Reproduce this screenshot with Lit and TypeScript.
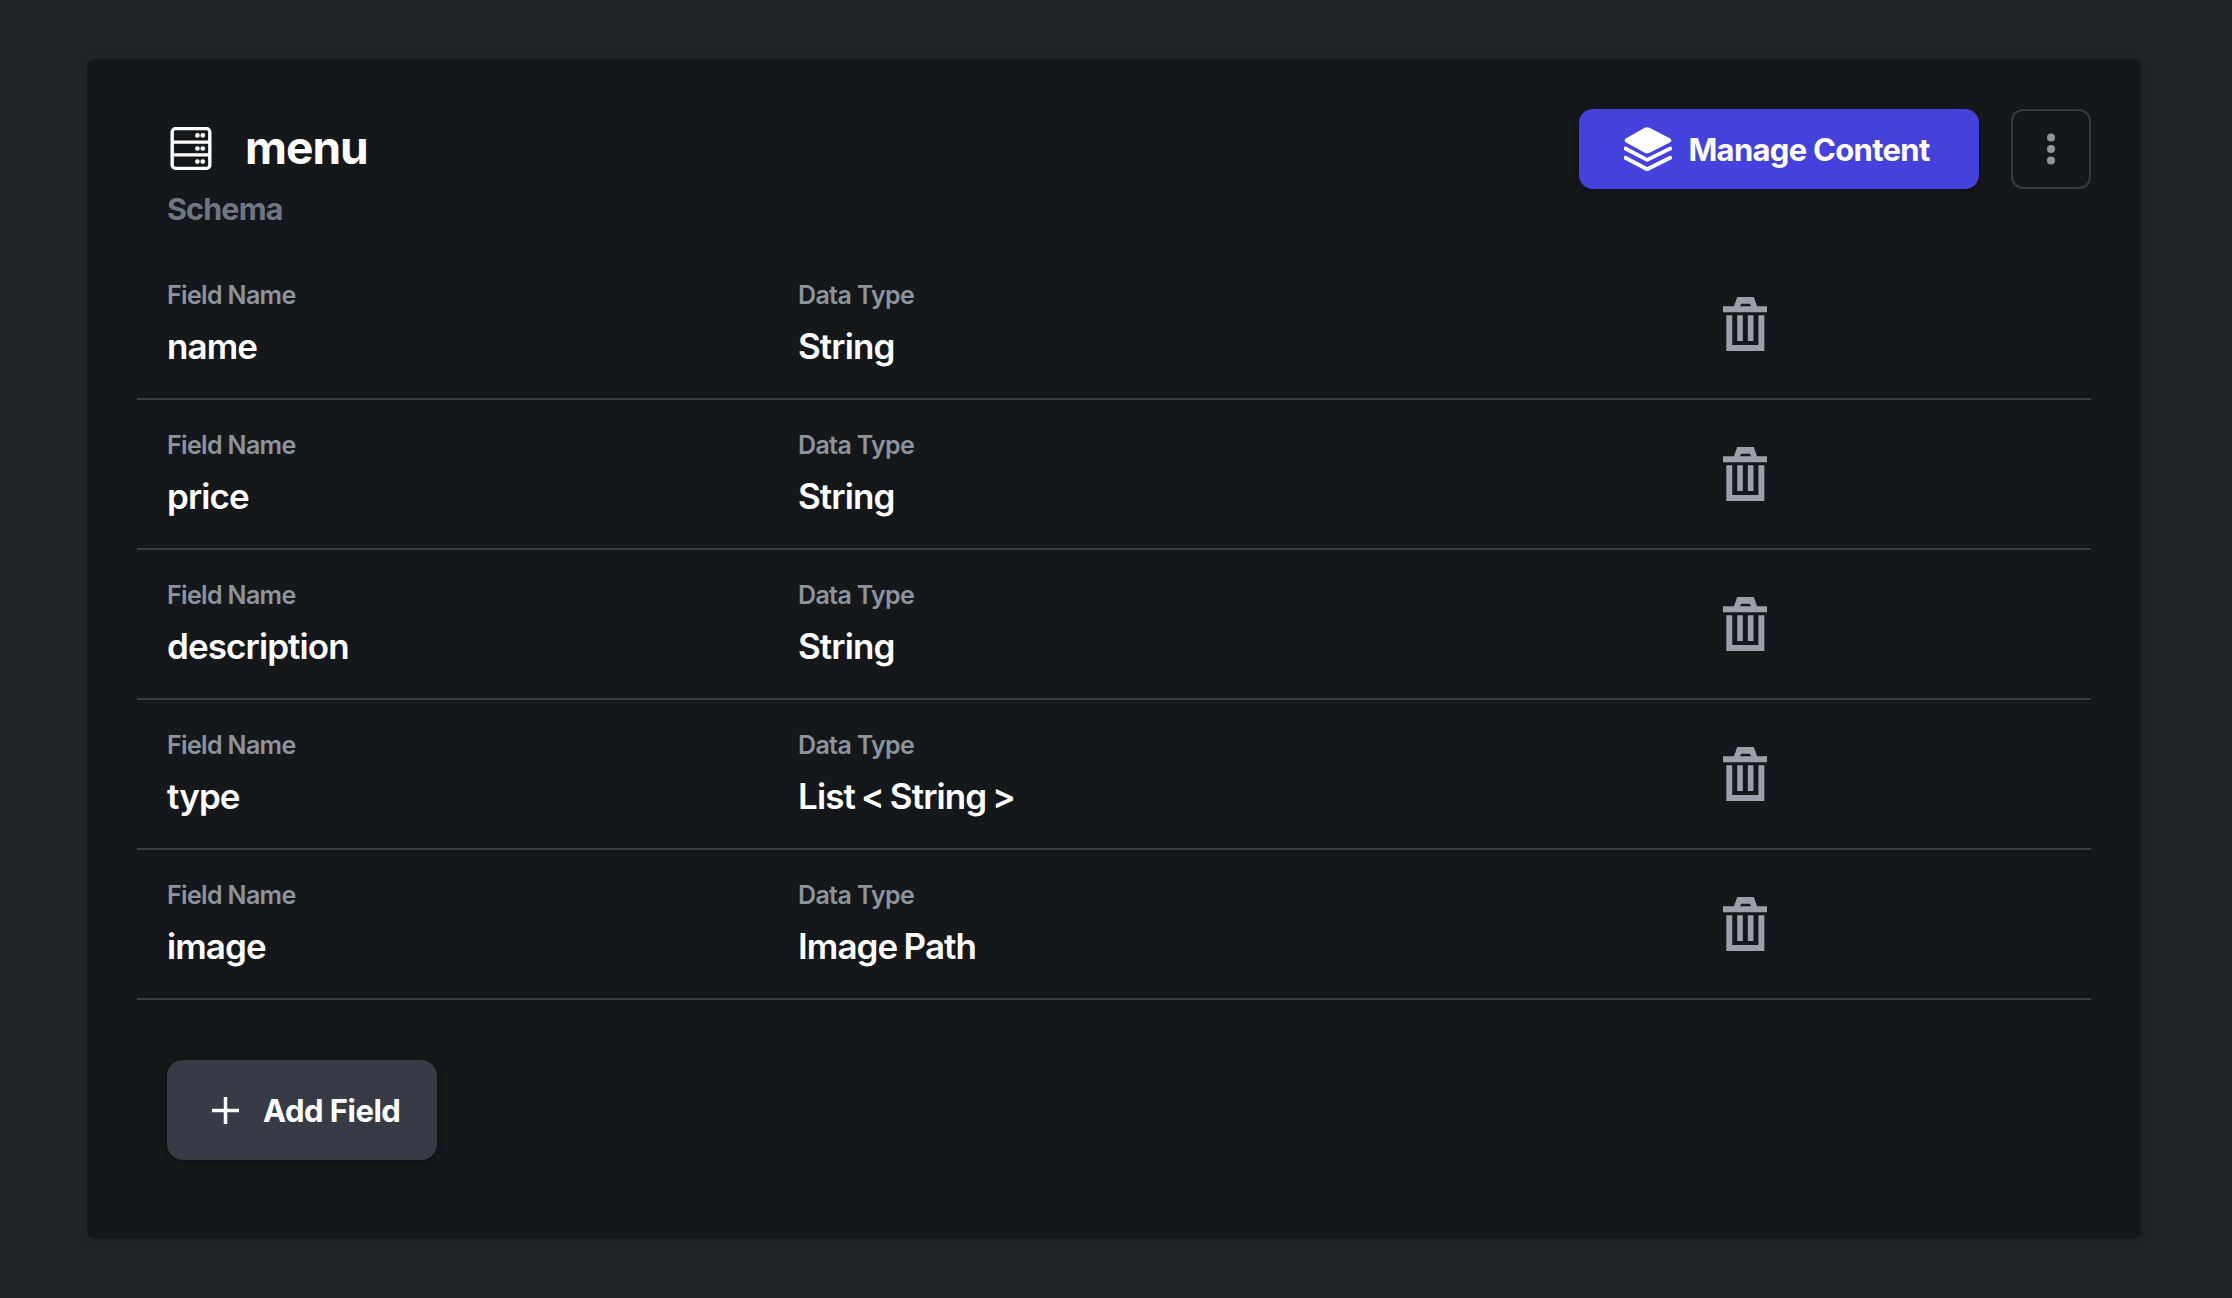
import { LitElement, html, svg, css } from "lit";
import { customElement } from "lit/decorators.js";

const FIELDS = [
  ["name", "String"],
  ["price", "String"],
  ["description", "String"],
  ["type", "List < String >"],
  ["image", "Image Path"],
];

@customElement("app-root")
export class AppRoot extends LitElement {
  static styles = css`
    :host { display: block; min-height: 1298px; background: #1f2429; font-family: Inter, "Noto Sans", sans-serif; padding: 59px 91px 60px 87px; box-sizing: border-box; }
    .card { background: #15181b; border-radius: 8px; padding: 50px 50px 79px 50px; height: 1180px; box-sizing: border-box; box-shadow: 0 2px 8px rgba(0,0,0,.12); }
    .head { display: flex; justify-content: space-between; height: 141px; padding-left: 30px; }
    .titles { display: flex; flex-direction: column; }
    .title { display: flex; align-items: center; height: 76px; gap: 33px; padding-left: 3px; color: #fff; font-size: 46px; font-weight: 700; letter-spacing: -1px; }
    .server { width: 42px; height: 43px; margin-top: 2px; }
    .schema { color: #6f7782; font-size: 30.5px; font-weight: 700; letter-spacing: -.85px; line-height: 36px; margin-top: 6px; }
    .actions { display: flex; gap: 32px; }
    button { font-family: inherit; border: none; color: #fff; display: flex; align-items: center; cursor: pointer; padding: 0; }
    .manage { width: 400px; height: 80px; background: #4541dc; border-radius: 14px; justify-content: center; gap: 16px; font-size: 31px; font-weight: 700; letter-spacing: -.7px; box-shadow: 0 2px 6px rgba(0,0,0,.3); }
    .layers { width: 48px; height: 44px; margin-left: -4px; }
    .kebab { width: 80px; height: 80px; background: transparent; border: 2px solid #353a42; border-radius: 12px; justify-content: center; box-sizing: border-box; }
    .row { display: grid; grid-template-columns: 631px 1fr 44px 324px; align-items: center; height: 150px; box-sizing: border-box; border-bottom: 2px solid #393e46; padding-left: 30px; }
    .label { color: #8c949e; font-size: 25px; font-weight: 600; letter-spacing: -.65px; line-height: 30px; }
    .value { color: #fff; font-size: 35px; font-weight: 600; letter-spacing: -.9px; word-spacing: -1.8px; line-height: 44px; margin-top: 14px; }
    .trash { width: 44px; height: 54px; display: block; }
    .add { margin: 60px 0 0 30px; width: 270px; height: 100px; background: #363b45; border-radius: 16px; justify-content: flex-start; padding-left: 45px; gap: 24px; font-size: 31px; font-weight: 700; letter-spacing: -.5px; box-shadow: 0 2px 6px rgba(0,0,0,.3); }
    .plus { width: 27px; height: 27px; }
  `;

  render() {
    return html`<div class="card">
      <div class="head">
        <div class="titles">
          <div class="title">
            <svg class="server" viewBox="62 52 122 128" fill="none">
              <rect x="67" y="57" width="112" height="118" rx="10" stroke="#fff" stroke-width="10"/>
              <path d="M67 97h112M67 135h112" stroke="#fff" stroke-width="10"/>
              ${[77, 116, 155].map((y) => svg`<circle cx="142" cy=${y} r="7" fill="#fff"/><circle cx="158" cy=${y} r="7" fill="#fff"/>`)}
            </svg>
            <span>menu</span>
          </div>
          <div class="schema">Schema</div>
        </div>
        <div class="actions">
          <button class="manage">
            <svg class="layers" viewBox="48 33 139 127" fill="#fff">
              <path d="M108 35q7-3 14 0l60 31q6 5 0 11l-60 30q-7 3-14 0L53 77q-6-6 0-11z"/>
              <path d="M52 95l63 33 67-33" fill="none" stroke="#fff" stroke-width="11" stroke-linecap="round" stroke-linejoin="round"/>
              <path d="M52 122l63 33 67-33" fill="none" stroke="#fff" stroke-width="11" stroke-linecap="round" stroke-linejoin="round"/>
            </svg>
            <span>Manage Content</span>
          </button>
          <button class="kebab" aria-label="More">
            <svg width="10" height="32" viewBox="0 0 10 32" fill="#8f96a0"><circle cx="5" cy="4.5" r="4"/><circle cx="5" cy="16" r="4"/><circle cx="5" cy="27.5" r="4"/></svg>
          </button>
        </div>
      </div>
      ${FIELDS.map(([n, t]) => html`<div class="row">
        <div><div class="label">Field Name</div><div class="value">${n}</div></div>
        <div><div class="label">Data Type</div><div class="value">${t}</div></div>
        <svg class="trash" viewBox="67 47 133 163" fill="#9aa1ab">
          <path fill-rule="evenodd" d="M100 75l10-28h50l10 28h30v18H67V75zM118 75h34l-4-8h-26z"/>
          <path d="M77 102h18v90h79v-90h18v108H77z"/>
          <rect x="110" y="102" width="17" height="78"/>
          <rect x="142" y="102" width="17" height="78"/>
        </svg>
        <span></span>
      </div>`)}
      <button class="add">
        <svg class="plus" viewBox="0 0 27 27"><path d="M13.5 0v27M0 13.5h27" stroke="#fff" stroke-width="3.5"/></svg>
        <span>Add Field</span>
      </button>
    </div>`;
  }
}
